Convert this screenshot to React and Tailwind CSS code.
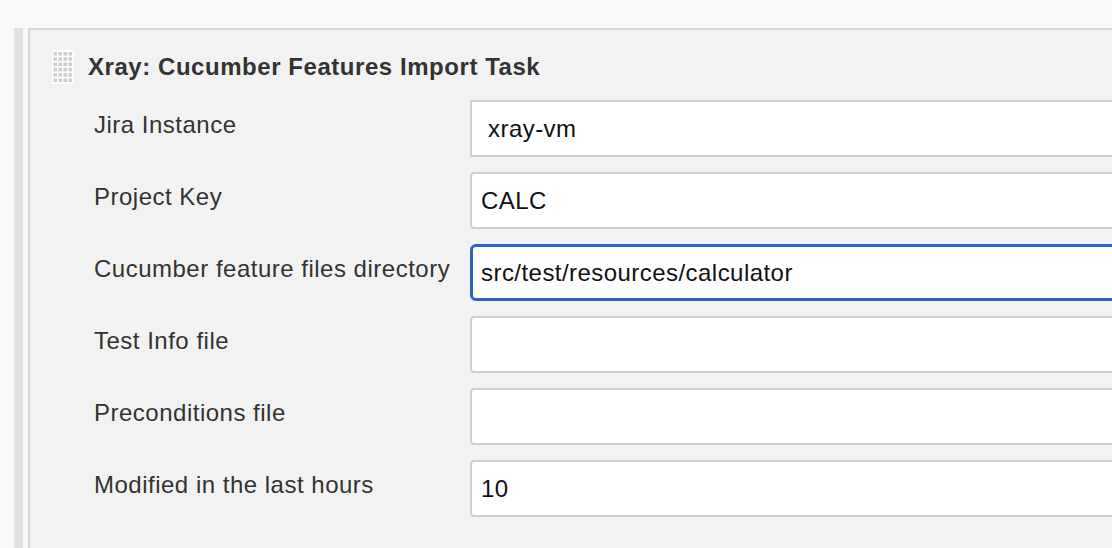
import React from 'react';

const fields = [
  { label: 'Jira Instance', value: 'xray-vm', select: true },
  { label: 'Project Key', value: 'CALC' },
  { label: 'Cucumber feature files directory', value: 'src/test/resources/calculator', focused: true },
  { label: 'Test Info file', value: '' },
  { label: 'Preconditions file', value: '' },
  { label: 'Modified in the last hours', value: '10' },
];

function Grip() {
  const dots = [];
  for (let r = 0; r < 6; r++) {
    for (let c = 0; c < 4; c++) {
      dots.push(<rect key={`${r}-${c}`} x={1.5 + c * 5} y={2 + r * 5.3} width="3.5" height="3.5" fill="#cdcdcd" />);
    }
  }
  return (
    <svg width="22" height="34" viewBox="0 0 22 34" className="shrink-0">
      <rect width="22" height="34" fill="#fdfdfd" />
      {dots}
    </svg>
  );
}

export default function App() {
  return (
    <div className="h-[548px] overflow-hidden bg-[#f9f9f9] pt-[28px] pl-[14px] flex font-['Liberation_Sans',Arial,sans-serif]">
      {/* left bar */}
      <div className="w-[9px] bg-[#e0e0e0] shrink-0" />

      {/* Task panel */}
      <div className="ml-[5px] -mr-[80px] flex-1 bg-[#f2f2f2] border-t-2 border-l-2 border-[#d6d6d6] pt-[20px]">
        <div className="flex items-center gap-[14px] pl-[22px] h-[34px]">
          <Grip />
          <h2 className="text-[24px] tracking-[0.55px] font-bold text-[#333] leading-none">Xray: Cucumber Features Import Task</h2>
        </div>

        <div className="mt-[16px] flex flex-col gap-[15px] pl-[64px]">
          {fields.map((f) => (
            <div key={f.label} className="flex items-start">
              <label className="w-[376px] shrink-0 pt-[12px] text-[24px] tracking-[0.5px] leading-[26px] text-[#333]">{f.label}</label>
              <div
                className={`flex-1 h-[57px] flex items-center bg-white text-[24px] tracking-[0.45px] text-[#111] ${
                  f.focused
                    ? 'border-[3px] border-[#2c62c6] rounded-[6px] pl-[8px]'
                    : f.select
                      ? 'border-2 border-[#d0d0d0] pl-[16px]'
                      : 'border-2 border-[#d0d0d0] rounded-[4px] pl-[9px]'
                }`}
              >
                {f.value}
              </div>
            </div>
          ))}
        </div>
      </div>
    </div>
  );
}
